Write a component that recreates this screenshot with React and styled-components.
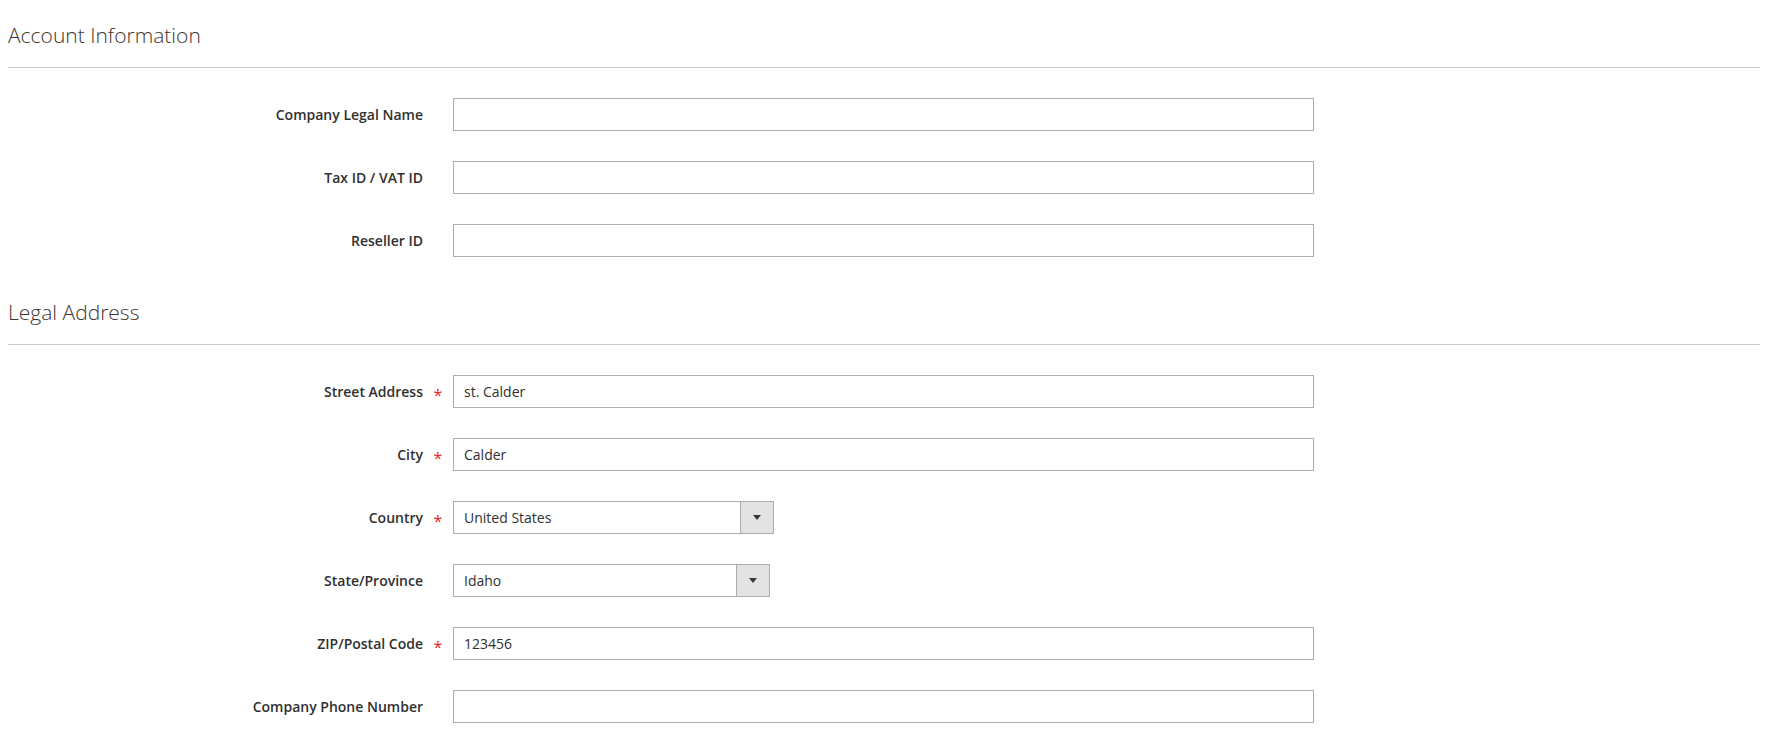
import React from 'react';
import styled, { createGlobalStyle } from 'styled-components';

const GlobalStyle = createGlobalStyle`
  html, body {
    margin: 0;
    padding: 0;
    background: #ffffff;
  }
  body {
    font-family: "Open Sans", "Liberation Sans", Arial, sans-serif;
    color: #303030;
  }
`;

const Page = styled.div`
  padding: 23px 8px 0 8px;
`;

const Section = styled.section`
  & + & {
    margin-top: 43px;
  }
`;

const SectionTitle = styled.h2`
  margin: 0;
  padding-bottom: 20px;
  border-bottom: 1px solid #cccccc;
  font-size: 21px;
  line-height: 24px;
  font-weight: 300;
  color: #41362f;
`;

const Fields = styled.div`
  display: grid;
  grid-template-columns: 415px 30px 861px;
  grid-auto-rows: 33px;
  row-gap: 30px;
  margin-top: 30px;
  align-items: center;
`;

const Label = styled.label`
  justify-self: end;
  font-size: 14px;
  line-height: 18px;
  font-weight: 600;
  color: #303030;
`;

// red star in the gap between label and control
const Mark = styled.span`
  justify-self: center;
  align-self: center;
  padding-top: 6px;
  font-size: 16px;
  line-height: 16px;
  color: #e22626;
  visibility: ${props => (props.required ? 'visible' : 'hidden')};
`;

const TextInput = styled.input`
  box-sizing: border-box;
  width: 100%;
  height: 33px;
  margin: 0;
  padding: 0 10px;
  border: 1px solid #adadad;
  border-radius: 0;
  background: #ffffff;
  font-family: inherit;
  font-size: 14px;
  color: #303030;
  outline: none;
`;

const SelectBox = styled.div`
  box-sizing: border-box;
  display: flex;
  width: ${props => props.width}px;
  height: 33px;
  border: 1px solid #adadad;
  background: #ffffff;
`;

const SelectValue = styled.select`
  flex: 1;
  min-width: 0;
  margin: 0;
  padding: 0 10px;
  border: 0;
  background: transparent;
  appearance: none;
  font-family: inherit;
  font-size: 14px;
  color: #303030;
  outline: none;
`;

const SelectButton = styled.span`
  display: flex;
  align-items: center;
  justify-content: center;
  width: 32px;
  border-left: 1px solid #adadad;
  background: #e3e3e3;

  &::after {
    content: '';
    width: 0;
    height: 0;
    border-left: 4px solid transparent;
    border-right: 4px solid transparent;
    border-top: 5px solid #41362f;
  }
`;

const accountFields = [
  { id: 'legal-name', label: 'Company Legal Name', value: '' },
  { id: 'vat', label: 'Tax ID / VAT ID', value: '' },
  { id: 'reseller', label: 'Reseller ID', value: '' },
];

const addressFields = [
  { id: 'street', label: 'Street Address', value: 'st. Calder', required: true },
  { id: 'city', label: 'City', value: 'Calder', required: true },
  { id: 'country', label: 'Country', value: 'United States', required: true, select: true, width: 321 },
  { id: 'region', label: 'State/Province', value: 'Idaho', select: true, width: 317 },
  { id: 'zip', label: 'ZIP/Postal Code', value: '123456', required: true },
  { id: 'phone', label: 'Company Phone Number', value: '' },
];

const Field = ({ field }) => (
  <>
    <Label htmlFor={field.id}>{field.label}</Label>
    <Mark required={field.required}>*</Mark>
    {field.select ? (
      <SelectBox width={field.width}>
        <SelectValue id={field.id} defaultValue={field.value}>
          <option value={field.value}>{field.value}</option>
        </SelectValue>
        <SelectButton />
      </SelectBox>
    ) : (
      <TextInput id={field.id} type="text" defaultValue={field.value} />
    )}
  </>
);

const FormSection = ({ title, fields }) => (
  <Section>
    <SectionTitle>{title}</SectionTitle>
    <Fields>
      {fields.map(f => (
        <Field key={f.id} field={f} />
      ))}
    </Fields>
  </Section>
);

const App = () => (
  <Page>
    <GlobalStyle />
    <FormSection title="Account Information" fields={accountFields} />
    <FormSection title="Legal Address" fields={addressFields} />
  </Page>
);

export default App;
